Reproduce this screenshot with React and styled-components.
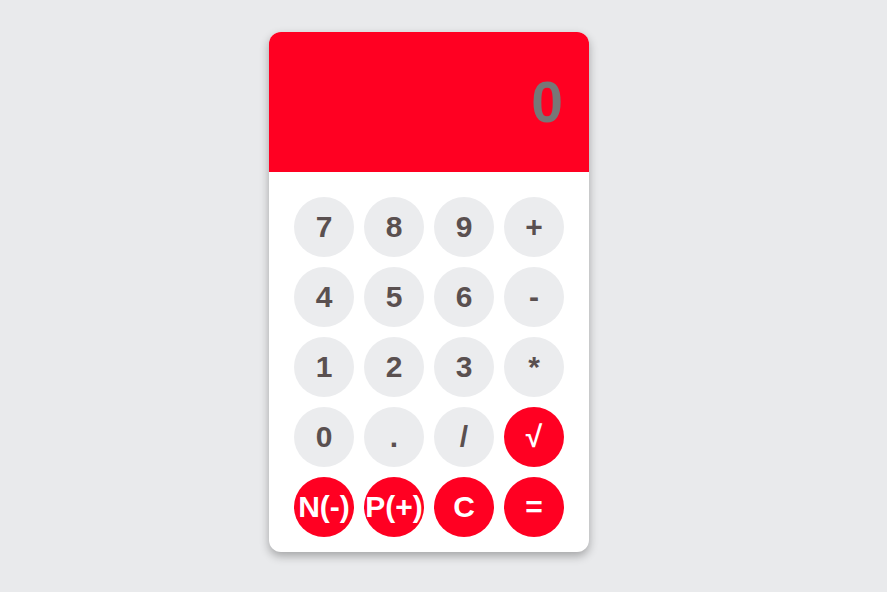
import React from "react";
import styled, { createGlobalStyle } from "styled-components";

const GlobalStyle = createGlobalStyle`
  html, body {
    margin: 0;
    padding: 0;
    background: #e9eaec;
    font-family: "Liberation Sans", Arial, sans-serif;
  }
`;

const Page = styled.div`
  display: flex;
  justify-content: center;
  padding: 32px 29px 0 0;
  height: 592px;
  box-sizing: border-box;
`;

const Calculator = styled.div`
  width: 320px;
  height: 520px;
  background: #ffffff;
  border-radius: 12px;
  overflow: hidden;
  box-shadow: 0 4px 10px rgba(0, 0, 0, 0.3);
  display: flex;
  flex-direction: column;
`;

const Display = styled.div`
  height: 140px;
  background: #ff0022;
  display: flex;
  align-items: center;
  justify-content: flex-end;
  padding: 0 26px 0 25px;
  box-sizing: border-box;
  color: #777777;
  font-size: 57px;
  font-weight: bold;
`;

const Keys = styled.div`
  display: grid;
  grid-template-columns: repeat(4, 60px);
  grid-auto-rows: 60px;
  gap: 10px;
  padding: 25px 25px 15px;
`;

const Key = styled.button`
  width: 60px;
  height: 60px;
  border: none;
  border-radius: 50%;
  padding: 0;
  font-family: "Liberation Sans", Arial, sans-serif;
  font-weight: bold;
  font-size: 30px;
  cursor: pointer;
  background: ${(p) => (p.$accent ? "#ff0022" : "#ebecee")};
  color: ${(p) => (p.$accent ? "#ffffff" : "#5a5050")};
  display: flex;
  align-items: center;
  justify-content: center;
  white-space: nowrap;
`;

const keys = [
  ["7"], ["8"], ["9"], ["+"],
  ["4"], ["5"], ["6"], ["-"],
  ["1"], ["2"], ["3"], ["*"],
  ["0"], ["."], ["/"], ["√", true],
  ["N(-)", true], ["P(+)", true], ["C", true], ["=", true],
];

const App = () => {
  return (
    <Page>
      <GlobalStyle />
      <Calculator>
        <Display>0</Display>
        <Keys>
          {keys.map(([label, accent]) => (
            <Key key={label} $accent={accent}>
              {label}
            </Key>
          ))}
        </Keys>
      </Calculator>
    </Page>
  );
};

export default App;
